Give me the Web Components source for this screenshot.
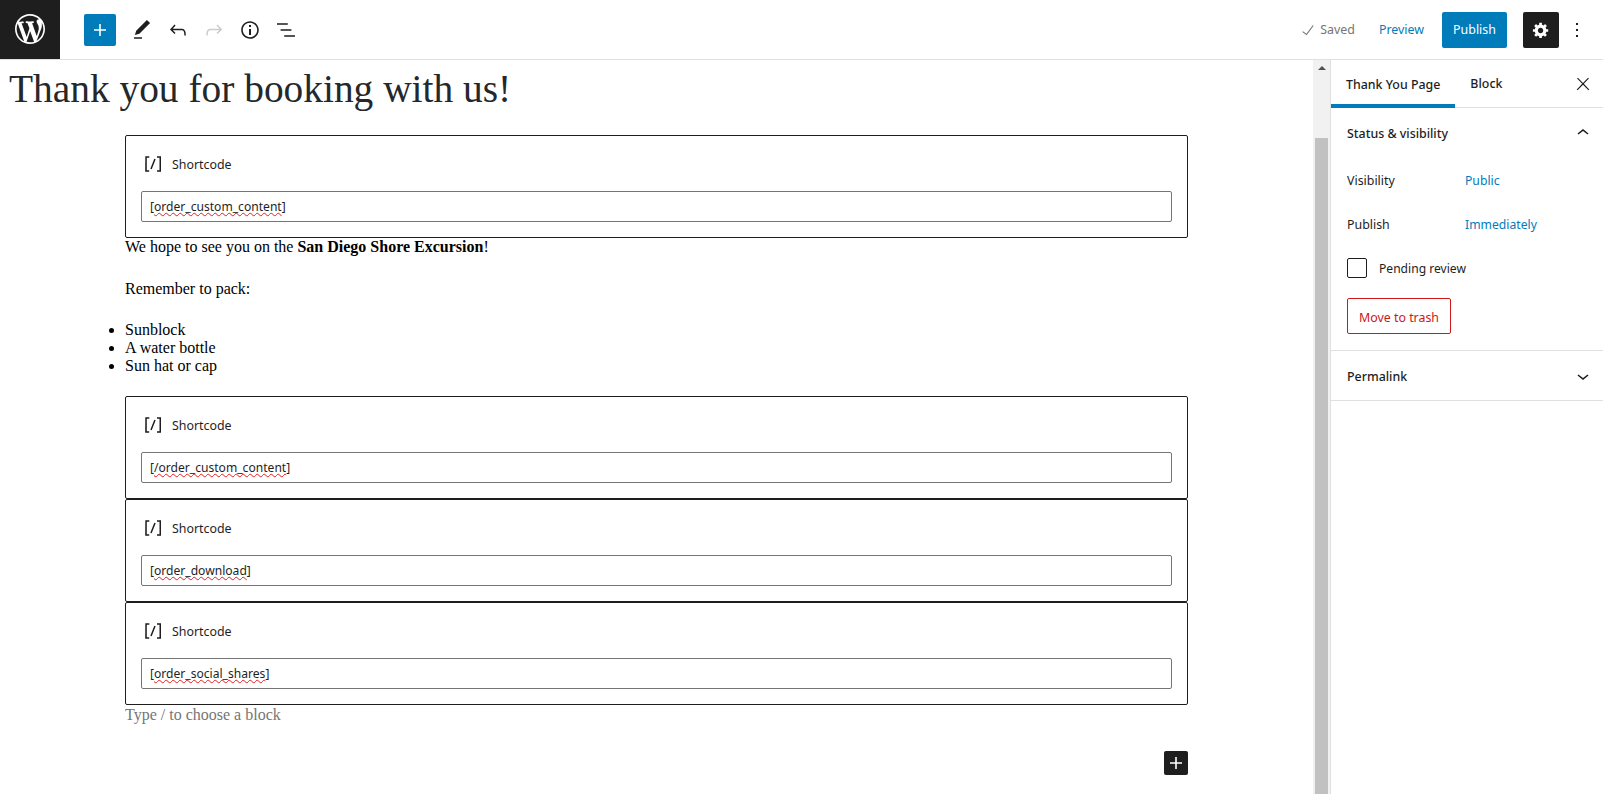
<!DOCTYPE html>
<html>
<head>
<meta charset="utf-8">
<title>Thank You Page</title>
<style>
    html, body { margin: 0; height: 100%; overflow: hidden; background: #fff; }
</style>
</head>
<body>
<wp-editor></wp-editor>
<script>
const ICONS = {
    wp: ['0 0 20 20', 'M20 10c0-5.51-4.49-10-10-10C4.48 0 0 4.49 0 10c0 5.52 4.48 10 10 10 5.51 0 10-4.48 10-10zM7.78 15.37L4.37 6.22c.55-.02 1.17-.08 1.17-.08.5-.06.44-1.13-.06-1.11 0 0-1.45.11-2.37.11-.18 0-.37 0-.58-.01C4.12 2.69 6.87 1.11 10 1.11c2.33 0 4.45.87 6.05 2.34-.68-.11-1.65.39-1.65 1.58 0 .74.45 1.36.9 2.1.35.61.55 1.36.55 2.46 0 1.49-1.4 5-1.4 5l-3.03-8.37c.54-.02.82-.17.82-.17.5-.05.44-1.25-.06-1.22 0 0-1.44.12-2.38.12-.87 0-2.33-.12-2.33-.12-.5-.03-.56 1.2-.06 1.22l.92.08 1.26 3.41zM17.41 10c.24-.64.74-1.87.43-4.25.7 1.29 1.05 2.71 1.05 4.25 0 3.29-1.73 6.24-4.4 7.78.97-2.59 1.94-5.2 2.92-7.78zM6.1 18.09C3.12 16.65 1.11 13.53 1.11 10c0-1.3.23-2.48.72-3.59C3.25 10.3 4.67 14.2 6.1 18.09zm4.03-6.63l2.58 6.98c-.86.29-1.76.45-2.71.45-.79 0-1.57-.11-2.29-.33.81-2.38 1.62-4.74 2.42-7.1z'],
    plus: ['0 0 24 24', 'M18 11.2h-5.2V6h-1.6v5.2H6v1.6h5.2V18h1.6v-5.2H18z'],
    pencil: ['0 0 24 24', 'M20.1 5.1L16.9 2 6.2 12.7l-1.3 4.4 4.5-1.3L20.1 5.1zM4 20.8h8v-1.5H4v1.5z'],
    undo: ['0 0 24 24', 'M18.3 11.7c-.6-.6-1.4-.9-2.3-.9H6.7l2.9-3.3-1.1-1-4.5 5L8.5 16l1-1-2.7-2.7H16c.5 0 .9.2 1.3.5 1 1 1 3.4 1 4.5v.3h1.5v-.2c0-1.5 0-4.3-1.5-5.7z'],
    redo: ['0 0 24 24', 'M15.6 6.5l-1.1 1 2.9 3.3H8c-.9 0-1.7.3-2.3.9-1.4 1.5-1.4 4.2-1.4 5.6v.2h1.5v-.3c0-1.1 0-3.5 1-4.5.3-.3.7-.5 1.3-.5h9.2L14.5 15l1.1 1.1 4.6-4.6-4.6-5z'],
    info: ['0 0 24 24', 'M12 3.2c-4.8 0-8.8 3.9-8.8 8.8 0 4.8 3.9 8.8 8.8 8.8 4.8 0 8.8-3.9 8.8-8.8 0-4.8-4-8.8-8.8-8.8zm0 16c-4 0-7.2-3.3-7.2-7.2C4.8 8 8 4.8 12 4.8s7.2 3.3 7.2 7.2c0 4-3.2 7.2-7.2 7.2zM11 17h2v-6h-2v6zm0-8h2V7h-2v2z'],
    list: ['0 0 24 24', 'M13.8 5.2H3v1.5h10.8V5.2zm-3.6 12v1.5H21v-1.5H10.2zm7.2-6H6.6v1.5h10.8v-1.5z'],
    cog: ['0 0 20 20', 'M18 12h-2.18c-.17.7-.44 1.35-.81 1.93l1.54 1.54-2.1 2.1-1.54-1.54c-.58.36-1.23.63-1.91.79V19H8v-2.18c-.68-.16-1.33-.43-1.91-.79l-1.54 1.54-2.12-2.12 1.54-1.54c-.36-.58-.63-1.23-.79-1.91H1V9.03h2.17c.16-.7.44-1.35.8-1.94L2.43 5.55l2.1-2.1 1.54 1.54c.58-.37 1.24-.64 1.93-.81V2h3v2.18c.68.16 1.33.43 1.91.79l1.54-1.54 2.12 2.12-1.54 1.54c.36.59.64 1.24.8 1.94H18V12zm-8.5 1.5c1.66 0 3-1.34 3-3s-1.34-3-3-3-3 1.34-3 3 1.34 3 3 3z'],
    more: ['0 0 24 24', 'M13 19h-2v-2h2v2zm0-6h-2v-2h2v2zm0-6h-2V5h2v2z'],
    close: ['0 0 24 24', 'M13 11.8l6.1-6.3-1-1-6.1 6.2-6.1-6.2-1 1 6.1 6.3-6.5 6.7 1 1 6.5-6.6 6.5 6.6 1-1z'],
    up: ['0 0 24 24', 'M6.5 12.4L12 8l5.5 4.4-.9 1.2L12 10l-4.5 3.6-1-1.2z'],
    down: ['0 0 24 24', 'M17.5 11.6L12 16l-5.5-4.4.9-1.2L12 14l4.5-3.6 1 1.2z'],
    shortcode: ['0 0 24 24', 'M16 4.2v1.5h2.5v12.5H16v1.5h4V4.2h-4zM4.2 19.8h4v-1.5H5.8V5.8h2.5V4.2h-4l-.1 15.6zm5.1-3.1l1.4.6 4-10-1.4-.6-4 10z'],
    check: ['0 0 24 24', 'M18.3 5.6L9.9 16.9l-4.6-3.4-.9 1.2 5.8 4.3 9.3-12.6z']
};

class WpIcon extends HTMLElement {
    connectedCallback() {
        const [box, d] = ICONS[this.getAttribute('name')];
        const size = this.getAttribute('size') || 24;
        this.attachShadow({ mode: 'open' }).innerHTML = `
            <style>
                :host { display: inline-flex; flex: none; }
                svg { display: block; fill: currentColor; }
            </style>
            <svg width="${size}" height="${size}" viewBox="${box}"><path d="${d}"/></svg>
        `;
    }
}

class WpHeader extends HTMLElement {
    connectedCallback() {
        this.attachShadow({ mode: 'open' }).innerHTML = `
            <style>
                :host {
                    display: flex;
                    align-items: center;
                    height: 60px;
                    box-sizing: border-box;
                    border-bottom: 1px solid #e0e0e0;
                    color: #1e1e1e;
                    font: 12.4px "Noto Sans", sans-serif;
                }
                .logo {
                    width: 60px;
                    height: 60px;
                    margin-top: -1px;
                    background: #1e1e1e;
                    color: #fff;
                    display: flex;
                    align-items: center;
                    justify-content: center;
                }
                .add {
                    width: 32px;
                    height: 32px;
                    margin: 0 8px 0 24px;
                    background: #007cba;
                    color: #fff;
                    border-radius: 2px;
                    display: flex;
                    align-items: center;
                    justify-content: center;
                }
                .tool {
                    width: 36px;
                    height: 36px;
                    display: flex;
                    align-items: center;
                    justify-content: center;
                }
                .off { color: #ccc; }
                .right {
                    margin-left: auto;
                    margin-right: 8px;
                    display: flex;
                    align-items: center;
                }
                .saved {
                    display: flex;
                    align-items: center;
                    gap: 3px;
                    color: #757575;
                    margin-right: 24px;
                }
                .preview { color: #007cba; margin-right: 18px; }
                .publish {
                    width: 65px;
                    height: 36px;
                    background: #007cba;
                    color: #fff;
                    border-radius: 2px;
                    display: flex;
                    align-items: center;
                    justify-content: center;
                    margin-right: 16px;
                }
                .gear {
                    width: 36px;
                    height: 36px;
                    background: #1e1e1e;
                    color: #fff;
                    border-radius: 2px;
                    display: flex;
                    align-items: center;
                    justify-content: center;
                }
            </style>
            <div class="logo"><wp-icon name="wp" size="30"></wp-icon></div>
            <div class="add"><wp-icon name="plus"></wp-icon></div>
            <div class="tool"><wp-icon name="pencil"></wp-icon></div>
            <div class="tool"><wp-icon name="undo"></wp-icon></div>
            <div class="tool off"><wp-icon name="redo"></wp-icon></div>
            <div class="tool"><wp-icon name="info"></wp-icon></div>
            <div class="tool"><wp-icon name="list"></wp-icon></div>
            <div class="right">
                <div class="saved"><wp-icon name="check" size="18"></wp-icon><span>Saved</span></div>
                <div class="preview">Preview</div>
                <div class="publish">Publish</div>
                <div class="gear"><wp-icon name="cog" size="18"></wp-icon></div>
                <div class="tool"><wp-icon name="more"></wp-icon></div>
            </div>
        `;
    }
}

class WpShortcode extends HTMLElement {
    connectedCallback() {
        this.attachShadow({ mode: 'open' }).innerHTML = `
            <style>
                :host {
                    display: block;
                    box-sizing: border-box;
                    height: 103px;
                    padding: 16px 15px 15px;
                    border: 1px solid #1e1e1e;
                    border-radius: 2px;
                    color: #1e1e1e;
                    font: 12.4px "Noto Sans", sans-serif;
                }
                .label {
                    display: flex;
                    align-items: center;
                    gap: 7px;
                    height: 24px;
                    margin-bottom: 15px;
                }
                .input {
                    box-sizing: border-box;
                    height: 31px;
                    padding: 0 8px;
                    border: 1px solid #757575;
                    border-radius: 2px;
                    font-size: 12.1px;
                    line-height: 29px;
                    white-space: nowrap;
                }
                .typo {
                    text-decoration: underline wavy #e02020 1px;
                    text-underline-offset: 1px;
                }
            </style>
            <div class="label"><wp-icon name="shortcode"></wp-icon><span>Shortcode</span></div>
            <div class="input">[<span class="typo">${this.getAttribute('code')}</span>]</div>
        `;
    }
}

class WpContent extends HTMLElement {
    connectedCallback() {
        this.attachShadow({ mode: 'open' }).innerHTML = `
            <style>
                :host {
                    display: block;
                    flex: 1;
                    min-width: 0;
                    position: relative;
                    font: 16px/18px "Liberation Serif", serif;
                    color: #000;
                }
                h1 {
                    margin: 0 0 0 9px;
                    font: 400 39.4px/58px "Liberation Serif", serif;
                    color: #23282d;
                    height: 75px;
                }
                .col { width: 1063px; margin: 0 auto; }
                p { margin: 0 0 24px; }
                p + p { margin-bottom: 23px; }
                ul { margin: 0 0 21px; padding: 0; }
                .hint { color: #757575; padding-top: 1px; }
                .append {
                    position: absolute;
                    left: 1164px;
                    top: 691px;
                    width: 24px;
                    height: 24px;
                    background: #1e1e1e;
                    color: #fff;
                    border-radius: 2px;
                    display: flex;
                    align-items: center;
                    justify-content: center;
                }
            </style>
            <h1>Thank you for booking with us!</h1>
            <div class="col">
                <wp-shortcode code="order_custom_content"></wp-shortcode>
                <p>We hope to see you on the <b>San Diego Shore Excursion</b>!</p>
                <p>Remember to pack:</p>
                <ul>
                    <li>Sunblock</li>
                    <li>A water bottle</li>
                    <li>Sun hat or cap</li>
                </ul>
                <wp-shortcode code="/order_custom_content"></wp-shortcode>
                <wp-shortcode code="order_download"></wp-shortcode>
                <wp-shortcode code="order_social_shares"></wp-shortcode>
                <div class="hint">Type / to choose a block</div>
            </div>
            <div class="append"><wp-icon name="plus"></wp-icon></div>
        `;
    }
}

class WpScrollbar extends HTMLElement {
    connectedCallback() {
        this.attachShadow({ mode: 'open' }).innerHTML = `
            <style>
                :host {
                    display: flex;
                    flex-direction: column;
                    align-items: center;
                    flex: none;
                    width: 17px;
                    background: #f1f1f1;
                }
                .arrow {
                    margin-top: 6px;
                    width: 0;
                    height: 0;
                    border: 4px solid transparent;
                    border-top: 0;
                    border-bottom: 4px solid #505050;
                }
                .thumb {
                    flex: 1;
                    align-self: stretch;
                    margin: 68px 2px 0;
                    background: #c1c1c1;
                }
            </style>
            <div class="arrow"></div>
            <div class="thumb"></div>
        `;
    }
}

class WpPanel extends HTMLElement {
    connectedCallback() {
        const open = this.hasAttribute('open');
        this.attachShadow({ mode: 'open' }).innerHTML = `
            <style>
                :host {
                    display: block;
                    border-bottom: 1px solid #e0e0e0;
                }
                .head {
                    display: flex;
                    align-items: center;
                    justify-content: space-between;
                    height: 49px;
                    padding: 0 8px 0 16px;
                    font-weight: 500;
                }
                .head span { padding-top: 2px; }
                .body { padding: 1px 16px 16px; }
            </style>
            <div class="head">
                <span>${this.getAttribute('title')}</span>
                <wp-icon name="${open ? 'up' : 'down'}"></wp-icon>
            </div>
            ${open ? '<div class="body"><slot></slot></div>' : ''}
        `;
    }
}

class WpRow extends HTMLElement {
    connectedCallback() {
        this.attachShadow({ mode: 'open' }).innerHTML = `
            <style>
                :host {
                    display: grid;
                    grid-template-columns: 118px 1fr;
                    align-items: center;
                    height: 44px;
                }
                .val { color: #007cba; font-size: 12.2px; }
            </style>
            <span>${this.getAttribute('label')}</span>
            <span class="val">${this.getAttribute('value')}</span>
        `;
    }
}

class WpSidebar extends HTMLElement {
    connectedCallback() {
        this.attachShadow({ mode: 'open' }).innerHTML = `
            <style>
                :host {
                    display: block;
                    flex: none;
                    width: 273px;
                    box-sizing: border-box;
                    border-left: 1px solid #e0e0e0;
                    color: #1e1e1e;
                    font: 12.4px "Noto Sans", sans-serif;
                }
                .tabs {
                    display: flex;
                    align-items: stretch;
                    height: 48px;
                    box-sizing: border-box;
                    border-bottom: 1px solid #e0e0e0;
                }
                .tab {
                    display: flex;
                    align-items: center;
                    padding: 0 15px;
                    font-weight: 500;
                }
                .tab.active {
                    box-shadow: inset 0 -4px 0 #007cba;
                    margin-bottom: -1px;
                }
                .close {
                    margin-left: auto;
                    margin-right: 10px;
                    align-self: center;
                }
                .pending {
                    display: flex;
                    align-items: center;
                    gap: 12px;
                    height: 20px;
                    margin-top: 12px;
                    font-size: 12.1px;
                }
                .box {
                    width: 20px;
                    height: 20px;
                    box-sizing: border-box;
                    border: 1px solid #1e1e1e;
                    border-radius: 2px;
                }
                .trash {
                    display: flex;
                    align-items: center;
                    justify-content: center;
                    box-sizing: border-box;
                    width: 104px;
                    height: 36px;
                    margin-top: 20px;
                    padding-top: 2px;
                    border: 1px solid #cc1818;
                    border-radius: 2px;
                    color: #cc1818;
                }
            </style>
            <div class="tabs">
                <div class="tab active">Thank You Page</div>
                <div class="tab">Block</div>
                <wp-icon class="close" name="close" size="20"></wp-icon>
            </div>
            <wp-panel title="Status &amp; visibility" open>
                <wp-row label="Visibility" value="Public"></wp-row>
                <wp-row label="Publish" value="Immediately"></wp-row>
                <div class="pending">
                    <div class="box"></div>
                    <span>Pending review</span>
                </div>
                <div class="trash">Move to trash</div>
            </wp-panel>
            <wp-panel title="Permalink"></wp-panel>
        `;
    }
}

class WpEditor extends HTMLElement {
    connectedCallback() {
        this.attachShadow({ mode: 'open' }).innerHTML = `
            <style>
                :host {
                    display: flex;
                    flex-direction: column;
                    height: 100vh;
                }
                .body {
                    flex: 1;
                    display: flex;
                    min-height: 0;
                }
            </style>
            <wp-header></wp-header>
            <div class="body">
                <wp-content></wp-content>
                <wp-scrollbar></wp-scrollbar>
                <wp-sidebar></wp-sidebar>
            </div>
        `;
    }
}

customElements.define('wp-icon', WpIcon);
customElements.define('wp-header', WpHeader);
customElements.define('wp-shortcode', WpShortcode);
customElements.define('wp-content', WpContent);
customElements.define('wp-scrollbar', WpScrollbar);
customElements.define('wp-panel', WpPanel);
customElements.define('wp-row', WpRow);
customElements.define('wp-sidebar', WpSidebar);
customElements.define('wp-editor', WpEditor);
</script>
</body>
</html>
